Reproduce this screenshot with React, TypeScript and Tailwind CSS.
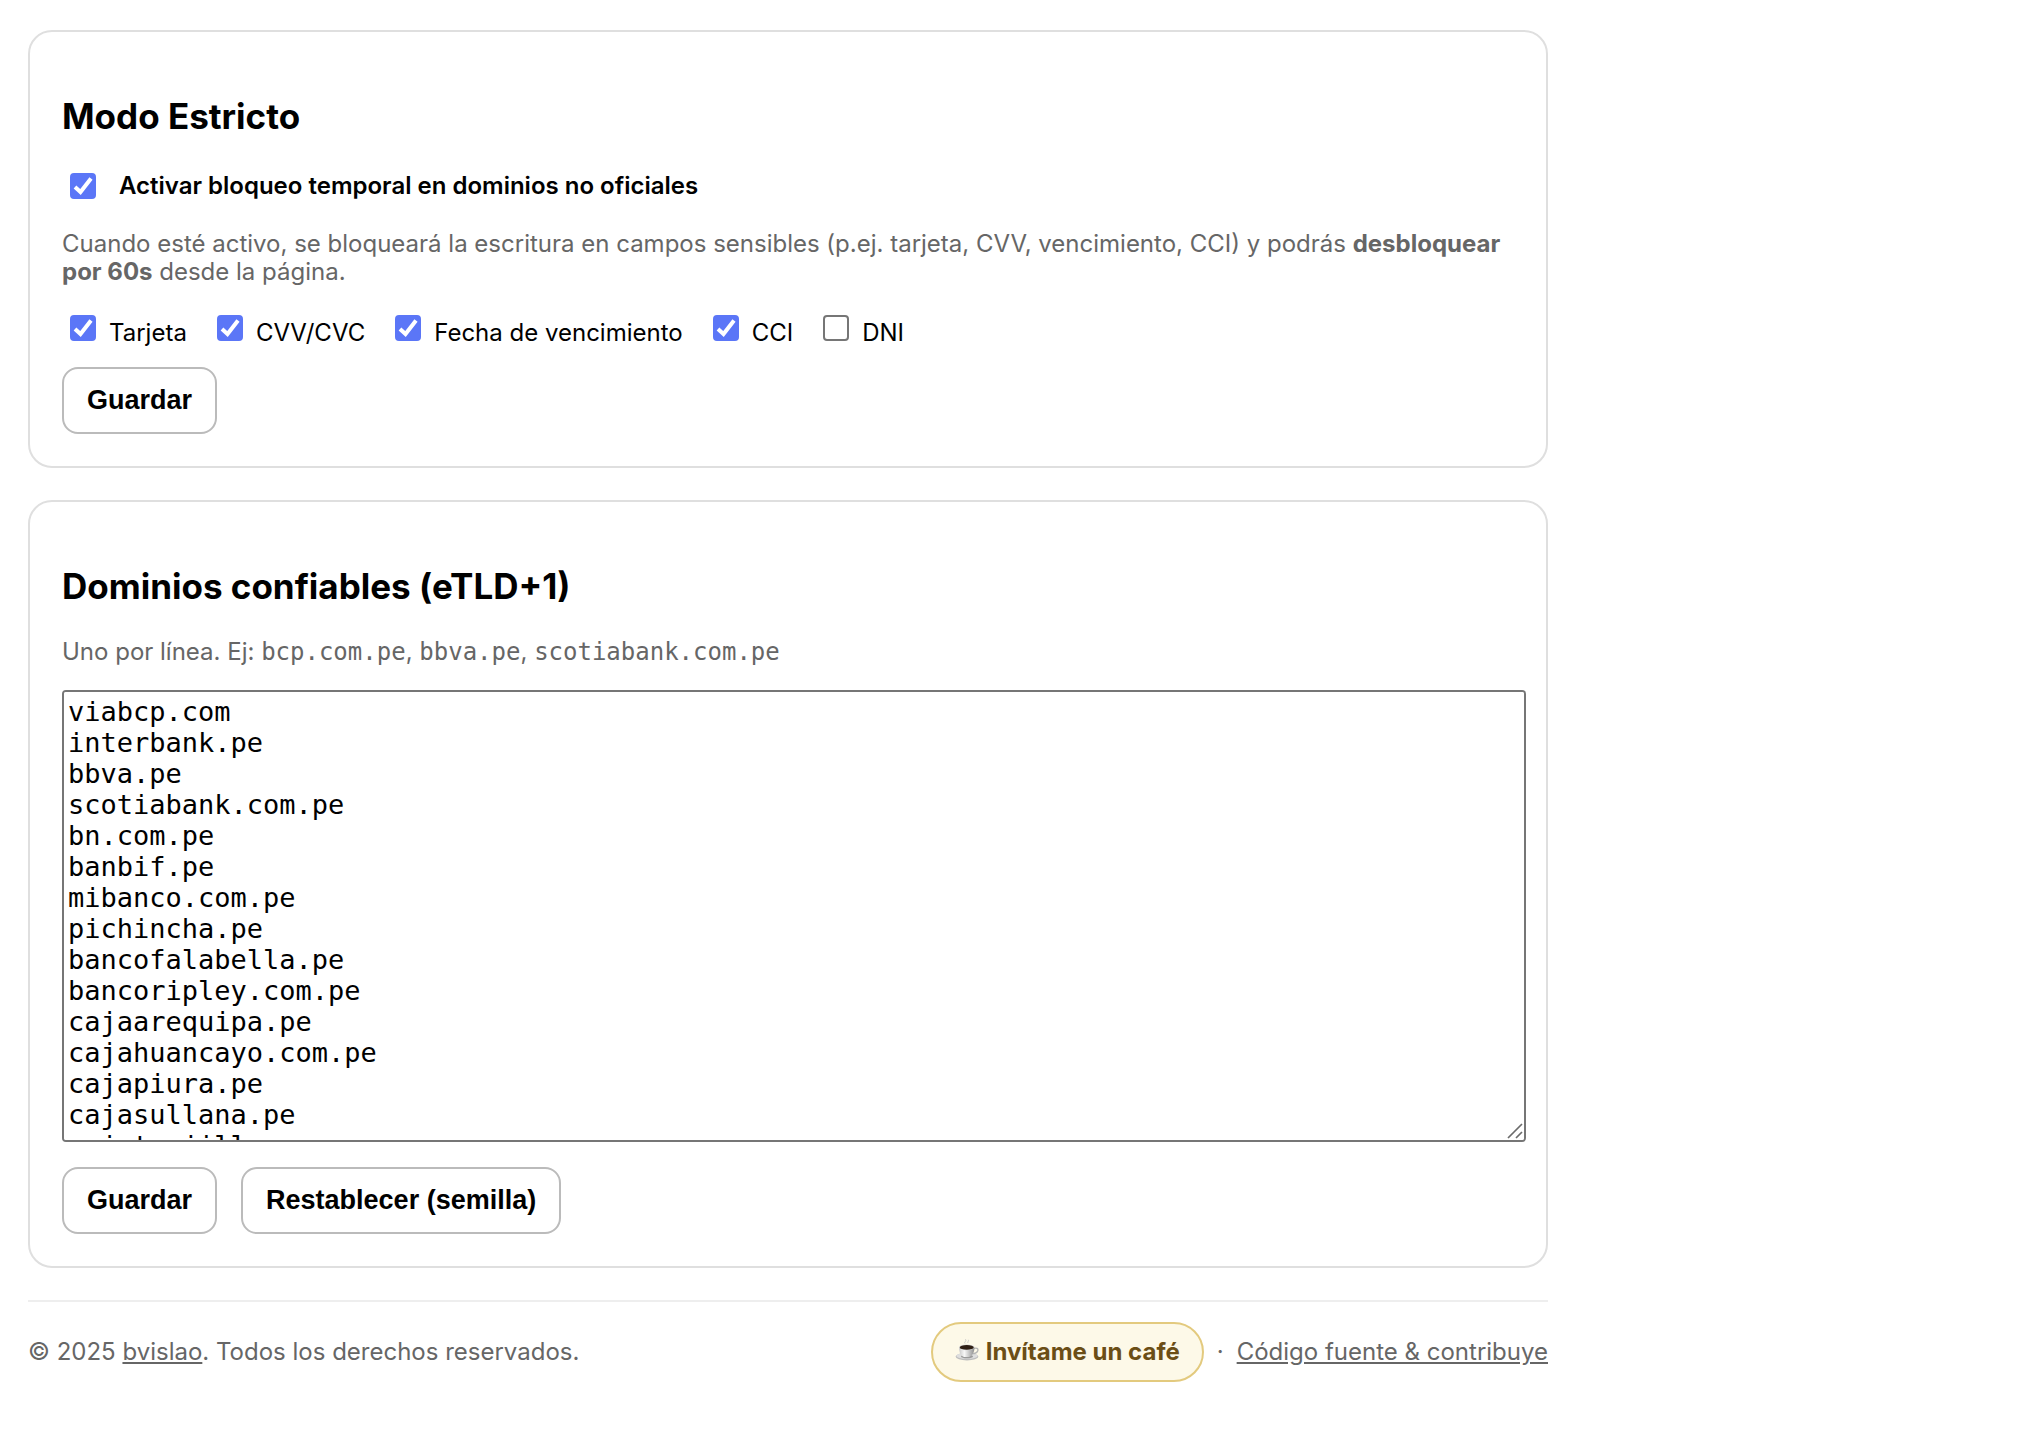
import { useState } from "react";
import type { ReactNode } from "react";

const SEED_DOMAINS = [
  "viabcp.com",
  "interbank.pe",
  "bbva.pe",
  "scotiabank.com.pe",
  "bn.com.pe",
  "banbif.pe",
  "mibanco.com.pe",
  "pichincha.pe",
  "bancofalabella.pe",
  "bancoripley.com.pe",
  "cajaarequipa.pe",
  "cajahuancayo.com.pe",
  "cajapiura.pe",
  "cajasullana.pe",
  "cajatrujillo.pe",
].join("\n");

const FIELDS = [
  { id: "tarjeta", label: "Tarjeta", on: true },
  { id: "cvv", label: "CVV/CVC", on: true },
  { id: "vencimiento", label: "Fecha de vencimiento", on: true },
  { id: "cci", label: "CCI", on: true },
  { id: "dni", label: "DNI", on: false },
];

function Checkbox({ id, defaultChecked }: { id: string; defaultChecked: boolean }) {
  return (
    <span className="grid size-[26px] shrink-0">
      <input
        id={id}
        type="checkbox"
        defaultChecked={defaultChecked}
        className="peer col-start-1 row-start-1 size-[26px] appearance-none rounded-[4px] border-2 border-[#767676] bg-white checked:border-[#5b76f7] checked:bg-[#5b76f7]"
      />
      <svg
        viewBox="0 0 26 26"
        aria-hidden="true"
        className="pointer-events-none invisible col-start-1 row-start-1 size-[26px] peer-checked:visible"
      >
        <path d="M5 14 L10.5 19 L21 5.5" fill="none" stroke="#fff" strokeWidth="4" />
      </svg>
    </span>
  );
}

function Card({ title, children }: { title: string; children: ReactNode }) {
  return (
    <section className="mb-8 rounded-3xl border-2 border-[#dfdfdf] px-8 pt-[63px] pb-8">
      <h2 className="text-[35px] leading-[42px] font-bold">{title}</h2>
      {children}
    </section>
  );
}

function Button({ children }: { children: ReactNode }) {
  return (
    <button
      type="button"
      className="rounded-2xl border-2 border-[#bbb] bg-white px-[23px] py-4 font-['Liberation_Sans',Arial,sans-serif] text-[27px] leading-[31px] font-bold"
    >
      {children}
    </button>
  );
}

function Coffee() {
  return (
    <svg viewBox="0 0 24 24" aria-hidden="true" className="mb-1 size-6 shrink-0">
      <defs>
        <linearGradient id="cup" x1="0" x2="1" y1="0" y2="0">
          <stop offset="0" stopColor="#c9c9c9" />
          <stop offset=".35" stopColor="#f7f7f7" />
          <stop offset="1" stopColor="#8e8e8e" />
        </linearGradient>
      </defs>
      <ellipse cx="12" cy="18.6" rx="11.4" ry="3.8" fill="#bdbdbd" />
      <ellipse cx="12" cy="17.8" rx="10.8" ry="3" fill="#dedede" />
      <ellipse cx="12" cy="18.4" rx="6" ry="1.8" fill="#9a9a9a" />
      <path
        d="M18.500 10.500c3-1.200 5 .2 4.300 2.200-.6 1.800-2.800 2.900-5.500 2.900"
        fill="none"
        stroke="#b5b5b5"
        strokeWidth="1.300"
      />
      <path d="M4 9.300c0 5.200 2 8.900 5 9.800h5c3-.9 5.500-4.600 5.500-9.800z" fill="url(#cup)" />
      <ellipse cx="11.750" cy="9.300" rx="7.800" ry="2.900" fill="#d8d8d8" />
      <ellipse cx="11.750" cy="9.400" rx="7" ry="2.300" fill="#2f1f14" />
      <path
        d="M10 5.500c-1.500-1.500 2-2 .5-4.300M13 5c-1-1.300 1.200-1.800.4-3.200"
        fill="none"
        stroke="#cfcfcb"
        strokeWidth="1"
      />
    </svg>
  );
}

export default function App() {
  const [domains, setDomains] = useState(SEED_DOMAINS);

  return (
    <main className="max-w-[1576px] bg-white px-7 pt-[30px] pb-12 font-[Inter,sans-serif] text-2xl text-black">
      <Card title="Modo Estricto">
        <div className="mt-[35px] flex items-center gap-[23px] pl-2">
          <Checkbox id="estricto" defaultChecked />
          <label htmlFor="estricto" className="leading-7 font-semibold">
            Activar bloqueo temporal en dominios no oficiales
          </label>
        </div>
        <p className="mt-[30px] leading-7 text-[#666]">
          Cuando esté activo, se bloqueará la escritura en campos sensibles (p.ej. tarjeta, CVV, vencimiento, CCI) y
          podrás <strong>desbloquear por 60s</strong> desde la página.
        </p>
        <div className="mt-[29px] mb-5 flex flex-wrap gap-x-[30px] pl-2">
          {FIELDS.map((f) => (
            <div key={f.id} className="flex items-start gap-[13px]">
              <Checkbox id={f.id} defaultChecked={f.on} />
              <label htmlFor={f.id} className="pt-1 leading-7">
                {f.label}
              </label>
            </div>
          ))}
        </div>
        <Button>Guardar</Button>
      </Card>

      <Card title="Dominios confiables (eTLD+1)">
        <p id="ayuda" className="mt-[31px] mb-6 leading-7 text-[#666]">
          Uno por línea. Ej: <code className="font-['DejaVu_Sans_Mono',monospace]">bcp.com.pe</code>,{" "}
          <code className="font-['DejaVu_Sans_Mono',monospace]">bbva.pe</code>,{" "}
          <code className="font-['DejaVu_Sans_Mono',monospace]">scotiabank.com.pe</code>
        </p>
        <div className="relative -mr-3 mb-[25px]">
          <textarea
            aria-label="Dominios confiables"
            aria-describedby="ayuda"
            spellCheck={false}
            value={domains}
            onChange={(e) => setDomains(e.target.value)}
            className="block h-[452px] w-full resize-none rounded-[4px] border-2 border-[#767676] bg-white p-1 font-['DejaVu_Sans_Mono',monospace] text-[27px] leading-[31px] [scrollbar-width:none]"
          />
          <svg
            viewBox="0 0 16 16"
            aria-hidden="true"
            className="pointer-events-none absolute right-[3px] bottom-[3px] size-4"
          >
            <path d="M1 15 L15 1 M9 15 L15 9" fill="none" stroke="#6b6b6b" strokeWidth="1.700" />
          </svg>
        </div>
        <div className="flex gap-6">
          <Button>Guardar</Button>
          <Button>Restablecer (semilla)</Button>
        </div>
      </Card>

      <footer className="flex items-center justify-between border-t-2 border-[#eee] pt-5 leading-7 text-[#666]">
        <p>
          © 2025{" "}
          <a href="#autor" className="underline">
            bvislao
          </a>
          . Todos los derechos reservados.
        </p>
        <div className="flex items-center">
          <a
            href="#cafe"
            className="flex items-center gap-[7px] rounded-full border-2 border-[#e3ca7e] bg-[#fdf9e8] px-[22px] py-[14px] leading-7 font-bold text-[#6b4e16]"
          >
            <Coffee />
            Invítame un café
          </a>
          <span className="px-[13px]">·</span>
          <a href="#codigo" className="underline">
            Código fuente &amp; contribuye
          </a>
        </div>
      </footer>
    </main>
  );
}
